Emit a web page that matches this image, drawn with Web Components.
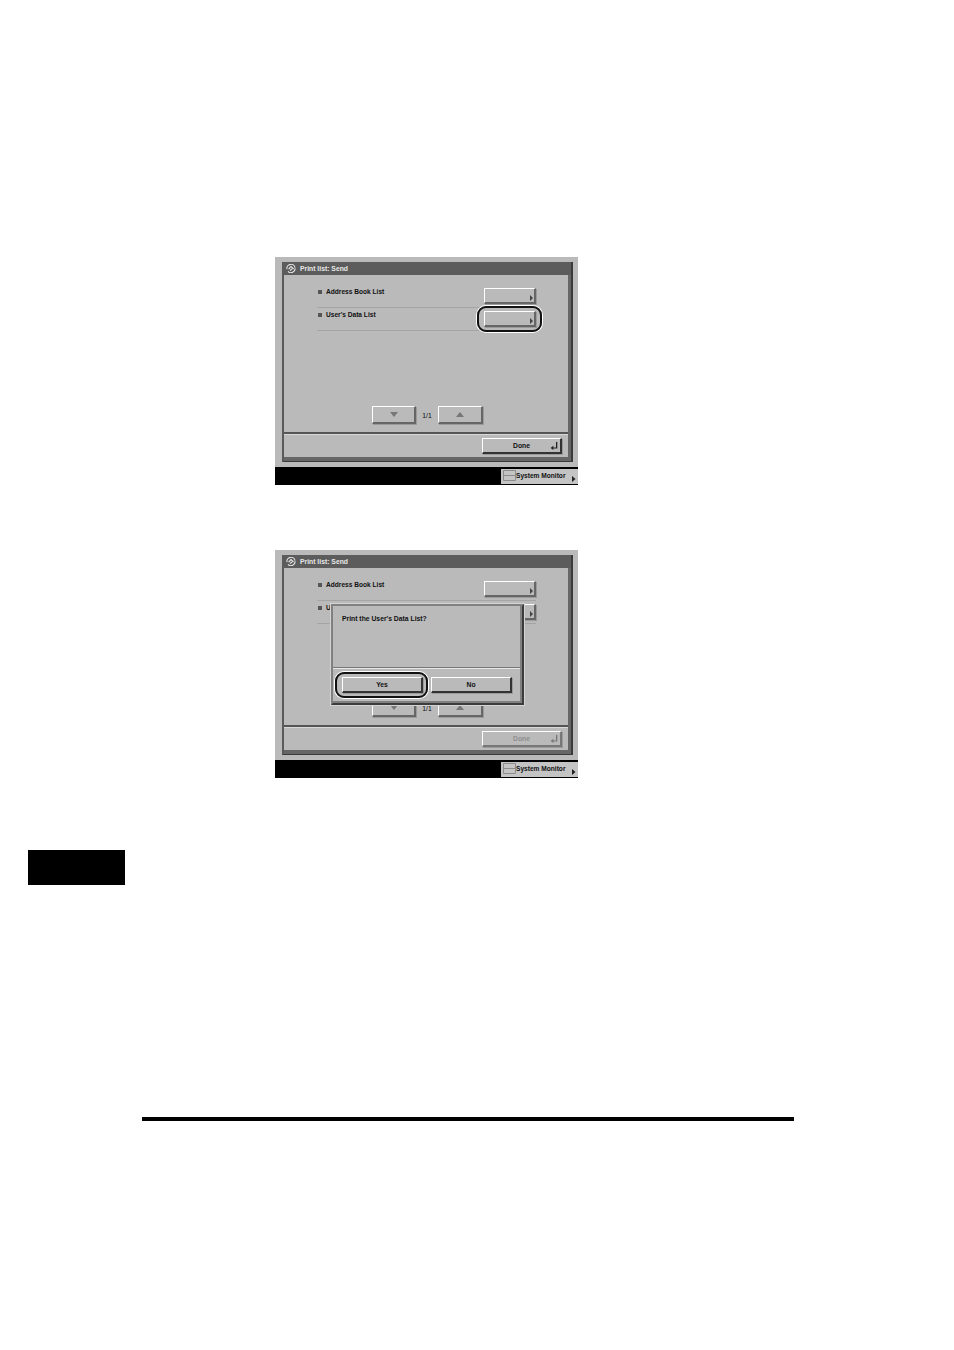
<!DOCTYPE html>
<html>
<head>
<meta charset="utf-8">
<title>Print list: Send</title>
<style>
  html, body { margin: 0; background: #fff; }
  body { font-family: "Liberation Sans", sans-serif; }
</style>
</head>
<body>
<manual-page>
  <print-screen>
    <list-row label="Address Book List"></list-row>
    <list-row label="User's Data List" ring></list-row>
  </print-screen>
  <print-screen dim>
    <list-row label="Address Book List"></list-row>
    <list-row label="User's Data List"></list-row>
    <confirm-dialog slot="overlay" text="Print the User's Data List?"></confirm-dialog>
  </print-screen>
</manual-page>

<script>
// Raised button from the copier panel, used for all the buttons on the screen
class PanelButton extends HTMLElement {
  constructor() {
    super();
    this.attachShadow({ mode: 'open' });
    this.shadowRoot.innerHTML = `
      <style>
        :host {
          display: flex;
          position: relative;
          box-sizing: border-box;
          align-items: center;
          justify-content: center;
          width: var(--w, 52px);
          height: var(--h, 16px);
          background: #bababa;
          border: 1px solid #fff;
          border-right: 2px solid #666;
          border-bottom: 2px solid #666;
          box-shadow: 1px 1px 0 #9a9a9a;
          font: bold 6.8px "Liberation Sans", sans-serif;
          color: #111;
        }
        :host([dark]) { border-right-color: #333; border-bottom-color: #333; }
        :host([disabled]) { color: #8f8f8f; border-right-color: #777; border-bottom-color: #777; }
        :host([ring])::after {
          content: "";
          position: absolute;
          top: -6px; left: -8px; right: var(--ring-r, -8px); bottom: -7px;
          border: 2.5px solid #111;
          border-radius: 9px;
          box-shadow: 0 0 0 1px #fff;
        }
      </style>
      <slot></slot><slot name="corner"></slot>`;
  }
}
customElements.define('panel-button', PanelButton);

// One line of the list: bullet, label and a button
class ListRow extends HTMLElement {
  constructor() {
    super();
    this.attachShadow({ mode: 'open' });
  }
  connectedCallback() {
    const ring = this.hasAttribute('ring') ? 'ring' : '';
    this.shadowRoot.innerHTML = `
      <style>
        :host {
          display: flex;
          box-sizing: border-box;
          height: 23px;
          padding-top: 3px;
          border-bottom: 1px solid #a4a4a4;
          font: bold 6.6px "Liberation Sans", sans-serif;
          color: #111;
        }
        .bullet { width: 4px; height: 4px; background: #555; margin: 2px 4px 0 1px; }
        .label { flex: 1; line-height: 8px; white-space: nowrap; }
        svg { position: absolute; right: 1px; bottom: 1px; }
      </style>
      <span class="bullet"></span>
      <span class="label">${this.getAttribute('label')}</span>
      <panel-button ${ring}>
        <svg slot="corner" width="3" height="6" viewBox="0 0 3 6"><path d="M0 0 L3 3 L0 6 Z" fill="#444"/></svg>
      </panel-button>`;
  }
}
customElements.define('list-row', ListRow);

// The yes / no message box that lies over the screen
class ConfirmDialog extends HTMLElement {
  constructor() {
    super();
    this.attachShadow({ mode: 'open' });
  }
  connectedCallback() {
    this.shadowRoot.innerHTML = `
      <style>
        :host {
          position: absolute;
          left: 56px; top: 54px;
          width: 193px; height: 101px;
          box-sizing: border-box;
          display: flex;
          flex-direction: column;
          background: #bababa;
          border: 2px solid #808080;
          border-right: 2px solid #3c3c3c;
          border-bottom: 2px solid #3c3c3c;
          box-shadow: inset -2px -2px 0 #808080, 0 0 0 1px #d4d4d4;
          padding: 0 2px 2px 0;
          font: bold 6.8px "Liberation Sans", sans-serif;
          color: #111;
        }
        .msg { height: 62px; box-sizing: border-box; padding: 9px 0 0 9px; line-height: 8px; border-bottom: 1px solid #777; }
        .btns { display: flex; gap: 8px; padding: 8px 0 0 9px; border-top: 1px solid #e6e6e6; --w: 81px; --h: 16px; --ring-r: -7px; }
      </style>
      <div class="msg">${this.getAttribute('text')}</div>
      <div class="btns">
        <panel-button dark ring>Yes</panel-button>
        <panel-button dark>No</panel-button>
      </div>`;
  }
}
customElements.define('confirm-dialog', ConfirmDialog);

// The whole touch panel: gray surround, window, pager, footer and black status bar
class PrintScreen extends HTMLElement {
  constructor() {
    super();
    this.attachShadow({ mode: 'open' });
  }
  connectedCallback() {
    const dis = this.hasAttribute('dim') ? 'disabled' : '';
    this.shadowRoot.innerHTML = `
      <style>
        :host {
          display: flex;
          flex-direction: column;
          position: relative;
          width: 303px;
          height: 228px;
          background: #bababa;
          font: bold 6.8px "Liberation Sans", sans-serif;
          color: #111;
        }
        .area { height: 210px; box-sizing: border-box; padding: 5px 5px 0 7px; }
        .win {
          box-sizing: border-box;
          height: 200px;
          display: flex;
          flex-direction: column;
          border-left: 2px solid #5a5a5a;
          border-right: 2px solid #3a3a3a;
          border-bottom: 1px solid #3a3a3a;
          box-shadow: inset -3px -4px 0 #666;
          padding: 0 3px 4px 0;
        }
        .title {
          height: 13px;
          margin: 0 -3px 0 -2px;
          background: #5c5c5c;
          color: #e8e8e8;
          display: flex;
          align-items: center;
          gap: 4px;
          padding-left: 4px;
          flex: none;
        }
        .rows { padding: 10px 32px 0 33px; }
        .pager {
          margin: auto 0 8px 88px;
          display: flex;
          align-items: center;
          --w: 44px; --h: 18px;
        }
        .count { width: 22px; text-align: center; font-weight: normal; }
        .foot {
          flex: none;
          height: 25px;
          box-sizing: border-box;
          border-top: 2px solid #555;
          box-shadow: inset 0 1px 0 #d8d8d8;
          display: flex;
          justify-content: flex-end;
          padding: 4px 6px 0 0;
          --w: 80px; --h: 16px;
        }
        .bar {
          height: 18px;
          background: #000;
          display: flex;
          justify-content: flex-end;
          align-items: flex-end;
          padding-bottom: 1px;
          box-sizing: border-box;
        }
        .mon {
          width: 77px; height: 15px;
          box-sizing: border-box;
          background: #c4c4c4;
          display: flex;
          align-items: center;
          padding: 0 0 2px 2px;
          gap: 0;
          position: relative;
          white-space: nowrap;
          font-size: 6.6px;
        }
        .mon .tri { position: absolute; right: 2px; bottom: 2px; }
      </style>
      <div class="area">
        <div class="win">
          <div class="title">
            <svg width="10" height="9" viewBox="0 0 10 9" fill="none" stroke="#e8e8e8" stroke-width="1.1">
              <path d="M1 5.2 A4 4 0 0 1 9 3.6 M9 4.2 A4 4 0 0 1 2 7.3"/><path d="M2.6 5.2 L5 2.6 L7.6 4.8 M4 6.5 L6.4 4.6"/>
            </svg>
            <span>Print list: Send</span>
          </div>
          <div class="rows"><slot></slot></div>
          <div class="pager">
            <panel-button>
              <svg width="8" height="5" viewBox="0 0 8 5"><path d="M0 0 H8 L4 5 Z" fill="#777"/></svg>
            </panel-button>
            <span class="count">1/1</span>
            <panel-button style="--w:45px">
              <svg width="8" height="5" viewBox="0 0 8 5"><path d="M0 5 H8 L4 0 Z" fill="#777"/></svg>
            </panel-button>
          </div>
          <div class="foot">
            <panel-button dark ${dis}>Done
              <svg slot="corner" style="position:absolute;right:2px;bottom:2px" width="8" height="8" viewBox="0 0 8 8" fill="${dis ? '#777' : '#222'}">
                <path d="M6 0 H7.3 V6.6 H3 V5.4 H6 Z"/><path d="M0.6 6 L3.4 3.8 V8 Z"/>
              </svg>
            </panel-button>
          </div>
        </div>
      </div>
      <div class="bar">
        <div class="mon">
          <svg width="13" height="11" viewBox="0 0 13 11" fill="none" stroke="#8c8c8c" stroke-width="1">
            <path d="M.5 .5 H12.5 V10.5 H.5 Z M.5 5.5 H12.5"/>
          </svg>
          <span>System Monitor</span>
          <svg class="tri" width="4" height="6" viewBox="0 0 4 6"><path d="M0 0 L3.5 3 L0 6 Z" fill="#222"/></svg>
        </div>
      </div>
      <slot name="overlay"></slot>`;
  }
}
customElements.define('print-screen', PrintScreen);

// Page of the manual: only the two screens, the black tab and the rule show
class ManualPage extends HTMLElement {
  constructor() {
    super();
    this.attachShadow({ mode: 'open' });
    this.shadowRoot.innerHTML = `
      <style>
        :host {
          display: flex;
          flex-direction: column;
          width: 954px;
          height: 1350px;
          box-sizing: border-box;
          padding-top: 257px;
          overflow: hidden;
        }
        .shots { display: flex; flex-direction: column; gap: 65px; margin-left: 275px; }
        .tab { width: 97px; height: 35px; background: #000; margin: 72px 0 0 28px; }
        .rule { width: 652px; height: 4px; background: #000; margin: 232px 0 0 142px; }
      </style>
      <div class="shots"><slot></slot></div>
      <div class="tab"></div>
      <div class="rule"></div>`;
  }
}
customElements.define('manual-page', ManualPage);
</script>
</body>
</html>
